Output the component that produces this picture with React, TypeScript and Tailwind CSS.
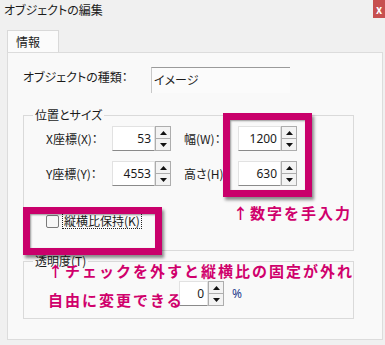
import React from 'react';

const jp = "font-['Noto_Sans_CJK_JP','Noto_Sans',sans-serif] [font-feature-settings:'palt']";

function SpinArrow({ up }: { up?: boolean }) {
  return (
    <div className="flex flex-1 items-center justify-center bg-[#f3f3f3]">
      <svg width="7" height="4" viewBox="0 0 7 4">
        {up ? <path d="M0 4 L3.5 0 L7 4 Z" fill="#111" /> : <path d="M0 0 L7 0 L3.5 4 Z" fill="#111" />}
      </svg>
    </div>
  );
}

function Spin({ value, w }: { value: string; w: string }) {
  return (
    <div className={`flex h-[25px] ${w}`}>
      <div className="flex flex-1 items-center justify-end border border-[#e2e2e2] border-b-[#8a8a8a] bg-white pr-[3px] font-['Noto_Sans',sans-serif] text-[12px] text-[#1b1b1b]">
        {value}
      </div>
      <div className="flex w-[16px] flex-col gap-[1px] border border-[#adadad] bg-[#adadad]">
        <SpinArrow up />
        <SpinArrow />
      </div>
    </div>
  );
}

function Group({ title, className, children }: { title: string; className: string; children: React.ReactNode }) {
  return (
    <fieldset className={`border border-[#dadada] px-[22px] ${className}`}>
      <legend className="ml-[-13px] px-[2px] text-[12px] leading-[14px] text-[#1b1b1b]">{title}</legend>
      {children}
    </fieldset>
  );
}

export default function App() {
  return (
    <div className={`relative h-[345px] w-[385px] overflow-hidden bg-[#f0f0f0] text-[#1b1b1b] ${jp}`}>
      <div className="flex h-[20px] items-center justify-between">
        <span className="pl-[4px] text-[12px] leading-none">オブジェクトの編集</span>
        <div className="flex h-[18px] w-[12px] items-center justify-center self-start bg-[#c75050] text-[11px] font-bold leading-none text-white">x</div>
      </div>

      <div className="mt-[10px] pl-[7px]">
        <div className="flex h-[22px] w-[52px] items-center border border-b-0 border-[#d9d9d9] bg-[#fbfbfb] pl-[8px] text-[12px]">情報</div>
      </div>

      <div className="relative mx-[7px] mr-[2px] h-[288px] border border-[#dcdcdc] bg-[#f9f9f9] px-[15px]">
        <div className="flex items-start pt-[14px]">
          <span className="mt-[2px] w-[128px] text-[12px] leading-[16px]">オブジェクトの種類：</span>
          <div className="h-[26px] w-[139px] border-l border-t border-l-[#c8c8c8] border-t-[#9a9a9a] bg-[#fbfbfb] pl-[2px] pt-[4px] text-[12px] leading-[16px]">イメージ</div>
        </div>

        <Group title="位置とサイズ" className="mt-[15px] h-[143px] w-[331px]">
          <div className="mt-[4px] flex flex-col gap-[10px]">
            <div className="flex items-center">
              <span className="w-[66px] text-[12px]">X座標(X)：</span>
              <Spin value="53" w="w-[59px]" />
              <span className="ml-[13px] w-[54px] text-[12px]">幅(W)：</span>
              <Spin value="1200" w="w-[59px]" />
            </div>
            <div className="flex items-center">
              <span className="w-[66px] text-[12px]">Y座標(Y)：</span>
              <Spin value="4553" w="w-[59px]" />
              <span className="ml-[13px] w-[54px] text-[12px]">高さ(H)</span>
              <Spin value="630" w="w-[59px]" />
            </div>
          </div>
          <label className="mt-[27px] flex items-center gap-[3px] text-[12px]">
            <span className="h-[13px] w-[13px] rounded-[2px] border border-[#7a7a7a] bg-[#f7f7f7]" />
            <span className="border border-dotted border-[#222] px-[1px] leading-[14px]">縦横比保持(K)</span>
          </label>
        </Group>

        <Group title="透明度(T)" className="mt-[3px] h-[65px] w-[331px]">
          <div className="mt-[13px] flex items-center pl-[133px]">
            <Spin value="0" w="w-[45px]" />
            <span className="ml-[8px] font-['Noto_Sans',sans-serif] text-[12px] text-[#1e3c8c]">%</span>
          </div>
        </Group>

        {/* annotation overlays */}
        <div className="absolute left-[215px] top-[60px] h-[84px] w-[89px] border-[7px] border-[#c9006b] shadow-[2px_3px_3px_rgba(0,0,0,0.45),inset_1px_1px_2px_rgba(0,0,0,0.4)]" />
        <div className="absolute left-[15px] top-[154px] h-[48px] w-[139px] border-[7px] border-[#c9006b] shadow-[2px_3px_3px_rgba(0,0,0,0.45),inset_1px_1px_2px_rgba(0,0,0,0.4)]" />
        <div className="absolute left-[225px] top-[150px] text-[15px] font-bold leading-[20px] tracking-[2px] text-[#d0006c] [font-feature-settings:normal]">↑数字を手入力</div>
        <div className="absolute left-[40px] top-[203px] text-[15px] font-bold leading-[29px] tracking-[2px] text-[#d0006c] [font-feature-settings:normal]">
          <div>↑チェックを外すと縦横比の固定が外れ</div>
          <div>自由に変更できる</div>
        </div>
      </div>
    </div>
  );
}
